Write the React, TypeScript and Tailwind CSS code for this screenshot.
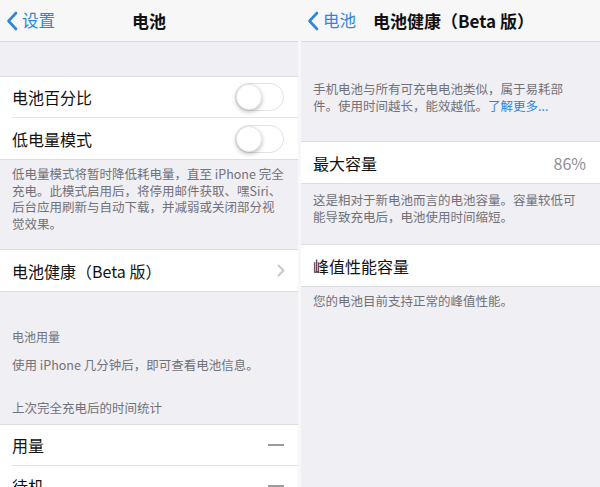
import React from "react";

const font = { fontFamily: '"Noto Sans CJK SC", "Noto Sans", sans-serif' };

const BackChevron = () => (
  <svg width="12" height="20" viewBox="0 0 12 20" fill="none">
    <path d="M10 2 L2.5 10 L10 18" stroke="#2f86d8" strokeWidth="2.6" strokeLinecap="round" strokeLinejoin="round" />
  </svg>
);

const NavBar = ({ back, title, centered = true }: { back: string; title: string; centered?: boolean }) => (
  <div className="relative h-[42px] bg-[#f7f7f8] border-b border-[#d9d9de] flex items-center">
    <div className="absolute left-[6px] top-0 h-full flex items-center gap-[4px] text-[16.5px] text-[#2f86d8]">
      <BackChevron />
      <span>{back}</span>
    </div>
    {centered ? (
      <div className="w-full text-center text-[17px] font-bold text-[#111]">{title}</div>
    ) : (
      <div className="pl-[72px] text-[17px] font-bold text-[#111]">{title}</div>
    )}
  </div>
);

const Toggle = () => (
  <div className="w-[49px] h-[28px] rounded-full border border-[#e2e2e6] bg-white relative">
    <div className="absolute left-[0px] top-[0px] w-[26px] h-[26px] rounded-full bg-white shadow-[0_2px_4px_rgba(0,0,0,0.25)] border border-[#e6e6e6]" />
  </div>
);

const Row = ({ label, right, last = false }: { label: string; right?: React.ReactNode; last?: boolean }) => (
  <div className="bg-white pl-[12px]">
    <div className={`h-[41px] flex items-center justify-between pr-[14px] ${last ? "" : "border-b border-[#e3e3e8]"}`}>
      <span className="text-[16px] text-[#111]">{label}</span>
      {right}
    </div>
  </div>
);

const Note = ({ children, className = "" }: { children: React.ReactNode; className?: string }) => (
  <div className={`pl-[12px] text-[12.5px] leading-[16.5px] text-[#727278] ${className}`}>{children}</div>
);

const Chevron = () => (
  <svg width="8" height="13" viewBox="0 0 8 13" fill="none">
    <path d="M1.5 1.5 L6.5 6.5 L1.5 11.5" stroke="#c7c7cc" strokeWidth="1.8" strokeLinecap="round" strokeLinejoin="round" />
  </svg>
);

const Dash = () => <span className="block w-[16px] h-[2px] bg-[#9a9a9f]" />;

function BatteryScreen() {
  return (
    <div className="w-[298px] h-full bg-[#efeff4] overflow-hidden">
      <NavBar back="设置" title="电池" />
      <div className="h-[34px]" />
      <div className="border-t border-[#dcdce1]">
        <Row label="电池百分比" right={<Toggle />} />
        <Row label="低电量模式" right={<Toggle />} last />
      </div>
      <Note className="pr-[12px] pt-[6px] pb-[17px] border-t border-[#dcdce1]">
        低电量模式将暂时降低耗电量，直至 iPhone 完全充电。此模式启用后，将停用邮件获取、嘿Siri、后台应用刷新与自动下载，并减弱或关闭部分视觉效果。
      </Note>
      <div className="border-y border-[#dcdce1]">
        <div className="bg-white pl-[12px] h-[41px] flex items-center justify-between pr-[13px]">
          <span className="text-[16px] text-[#111]">电池健康（Beta 版）</span>
          <Chevron />
        </div>
      </div>
      <Note className="pt-[37px] text-[12px]">电池用量</Note>
      <Note className="pt-[11px]">使用 iPhone 几分钟后，即可查看电池信息。</Note>
      <Note className="pt-[27px] pb-[7px]">上次完全充电后的时间统计</Note>
      <div className="border-t border-[#dcdce1]">
        <Row label="用量" right={<Dash />} />
        <Row label="待机" right={<Dash />} last />
      </div>
    </div>
  );
}

function HealthScreen() {
  return (
    <div className="flex-1 h-full bg-[#efeff4] overflow-hidden">
      <NavBar back="电池" title="电池健康（Beta 版）" centered={false} />
      <Note className="pr-[22px] pt-[39px] pb-[27px]">
        手机电池与所有可充电电池类似，属于易耗部件。使用时间越长，能效越低。
        <span className="text-[#2f86d8]">了解更多...</span>
      </Note>
      <div className="border-y border-[#dcdce1]">
        <Row label="最大容量" right={<span className="text-[16px] text-[#8e8e93]">86%</span>} last />
      </div>
      <Note className="pr-[22px] pt-[8px] pb-[19px]">
        这是相对于新电池而言的电池容量。容量较低可能导致充电后，电池使用时间缩短。
      </Note>
      <div className="border-y border-[#dcdce1]">
        <Row label="峰值性能容量" last />
      </div>
      <Note className="pr-[22px] pt-[6px]">您的电池目前支持正常的峰值性能。</Note>
    </div>
  );
}

export default function App() {
  return (
    <div className="w-[600px] h-[487px] flex bg-[#f7f7f9] overflow-hidden" style={font}>
      <BatteryScreen />
      <div className="w-[3px] bg-[#f7f7f9]" />
      <HealthScreen />
    </div>
  );
}
